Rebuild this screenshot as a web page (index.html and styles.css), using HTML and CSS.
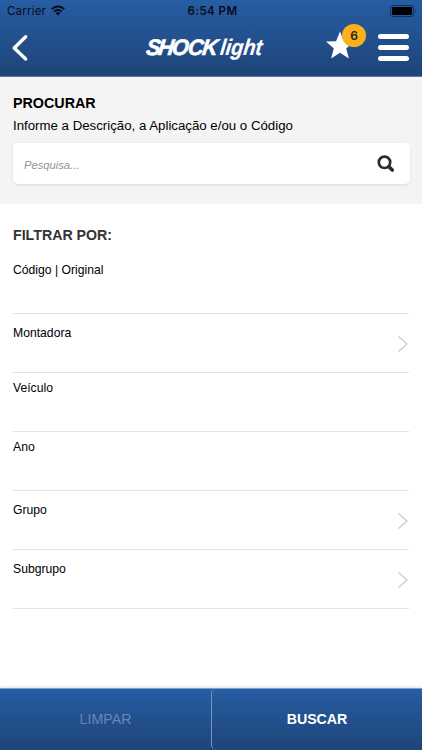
FILE: index.html
```html
<!DOCTYPE html>
<html lang="pt-BR">
<head>
<meta charset="utf-8">
<title>SHOCKlight</title>
<link rel="stylesheet" href="styles.css">
</head>
<body>
<div class="app">
  <header class="header">
    <div class="status">
      <div class="carrier"><span>Carrier</span>
        <svg class="wifi" width="14" height="11" viewBox="0 0 14 11" fill="none" stroke="#050c18" stroke-width="2"><path d="M.8 4.1a8.8 8.8 0 0 1 12.4 0M3.2 6.6a5.4 5.4 0 0 1 7.6 0"/><path d="M7 10.5 4.7 8.2a3.3 3.3 0 0 1 4.6 0z" fill="#050c18" stroke="none"/></svg>
      </div>
      <div class="clock">6:54 PM</div>
      <svg class="battery" width="27" height="12" viewBox="0 0 27 12"><rect x=".5" y=".5" width="23" height="11" rx="2.5" fill="none" stroke="#12305c"/><rect x="2" y="2" width="20" height="8" rx="1" fill="#000"/><path d="M25 4q2 2 0 4z" fill="#12305c"/></svg>
    </div>
    <nav class="nav">
      <svg class="back" width="18" height="28" viewBox="0 0 18 28"><path d="M14.7 2.7 3.2 14l11.5 11" fill="none" stroke="#fff" stroke-width="3.3" stroke-linecap="round" stroke-linejoin="round"/></svg>
      <svg class="logo" width="124" height="32" viewBox="0 0 124 32"><g transform="translate(0 23.5) skewX(-7)"><text class="shock" transform="scale(.96 1)"><tspan x="1.5">S</tspan><tspan x="14">H</tspan><tspan x="28.5">O</tspan><tspan x="45">C</tspan><tspan x="60">K</tspan></text><text class="light" x="75.5" y="0" textLength="42" lengthAdjust="spacingAndGlyphs">light</text></g></svg>
      <div class="favorite">
        <svg width="30" height="30" viewBox="0 0 30 30"><path d="m15 1.5 3.9 9.8 10 .3-7.7 6.8 2.7 10.1-8.9-5.7-8.9 5.7 2.7-10.1L1 11.6l10-.3z" fill="#fff"/></svg>
        <span class="badge">6</span>
      </div>
      <div class="menu"><i></i><i></i><i></i></div>
    </nav>
  </header>
  <section class="search">
    <h1>PROCURAR</h1>
    <p>Informe a Descrição, a Aplicação e/ou o Código</p>
    <div class="field"><span>Pesquisa...</span>
      <svg width="18" height="18" viewBox="0 0 18 18" fill="none" stroke="#2b2b2b"><circle cx="7.5" cy="7.3" r="5.7" stroke-width="2.7"/><path d="m11.9 11.7 3.4 3.4" stroke-width="3.6" stroke-linecap="round"/></svg>
    </div>
  </section>
  <main class="filters">
    <h2>FILTRAR POR:</h2>
    <div class="row first">Código | Original</div>
    <div class="row select">Montadora<svg class="chevron" width="12" height="18" viewBox="0 0 12 18"><path d="m1.5 1.5 8.5 7.5-8.5 7.5"/></svg></div>
    <div class="row">Veículo</div>
    <div class="row">Ano</div>
    <div class="row select">Grupo<svg class="chevron" width="12" height="18" viewBox="0 0 12 18"><path d="m1.5 1.5 8.5 7.5-8.5 7.5"/></svg></div>
    <div class="row select">Subgrupo<svg class="chevron" width="12" height="18" viewBox="0 0 12 18"><path d="m1.5 1.5 8.5 7.5-8.5 7.5"/></svg></div>
  </main>
  <footer class="actions">
    <div class="clear">LIMPAR</div>
    <div class="submit">BUSCAR</div>
  </footer>
</div>
</body>
</html>
```
FILE: styles.css
```css
* { box-sizing: border-box; }
body { margin: 0; font-family: "Liberation Sans", Arial, sans-serif; color: #000; background: #fff; }
svg { display: block; flex: none; }
.app { width: 422px; height: 750px; display: flex; flex-direction: column; overflow: hidden; }
.header { height: 77px; flex: none; background: linear-gradient(#275da3, #1e4478); border-bottom: 1px solid #61779f; }
.status { height: 22px; display: grid; grid-template-columns: 1fr auto 1fr; align-items: center; padding: 0 5px 0 7px; font-family: Inter, sans-serif; color: #050c18; }
.carrier { display: flex; align-items: center; gap: 5px; font-size: 11.5px; letter-spacing: .2px; }
.wifi { margin-top: -1px; }
.clock { font-size: 11.5px; font-weight: 600; letter-spacing: .45px; padding-left: 1px; }
.battery { justify-self: end; margin-top: -1px; }
.nav { height: 54px; display: flex; align-items: center; padding: 0 13px 0 11px; }
.back { margin-top: -3px; }
.logo { margin: -4px 0 0 115px; overflow: visible; }
.logo text { fill: #fff; font-family: "Liberation Sans", Arial, sans-serif; font-style: italic; font-weight: 700; stroke: #fff; }
.logo .shock { font-size: 22.5px; stroke-width: .6px; }
.logo .light { font-size: 22.5px; stroke-width: .2px; }
.favorite { position: relative; margin: -9px 0 0 57px; }
.badge { position: absolute; left: 17px; top: -6px; width: 24px; height: 23px; border-radius: 50%; background: #fbb01c; color: #222; font: 600 12px/23px Inter, sans-serif; text-align: center; }
.menu { width: 31px; margin: -4px 0 0 auto; display: grid; gap: 6px; }
.menu i { height: 5px; border-radius: 3px; background: #fff; }
.search { height: 127px; flex: none; padding: 16px 12px 0; background: #f4f4f4; }
.search h1 { margin: 0 0 0 1px; font-size: 14.3px; line-height: 20px; }
.search p { margin: 3px 0 0 1px; font-size: 13.26px; line-height: 20px; }
.field { height: 41px; margin: 7px 0 0 1px; padding: 0 15px 0 11px; display: flex; align-items: center; justify-content: space-between; background: #fff; border-radius: 5px; box-shadow: 0 1px 3px rgba(0,0,0,.1); }
.field span { font-size: 11.2px; font-style: italic; color: #929292; padding-top: 3px; }
.filters { flex: 1; padding: 21px 13px 0; }
.filters h2 { margin: 0; font-size: 14.2px; line-height: 20px; color: #333; }
.row { height: 59px; padding-top: 7px; border-bottom: 1px solid #e2e2e2; font-size: 12.2px; line-height: 16px; }
.row.first { height: 69px; padding-top: 17px; }
.row.select { display: flex; justify-content: space-between; padding-top: 11px; }
.chevron { margin-top: 10px; fill: none; stroke: #c9c9c9; stroke-width: 1.2; }
.actions { height: 62px; flex: none; display: grid; grid-template-columns: 211px 211px; background: linear-gradient(#275da3, #1e4478); border-top: 1px solid #7f9fca; box-shadow: 0 -1px 3px rgba(0,0,0,.12); font-size: 14.2px; line-height: 61px; text-align: center; }
.clear { color: #6488b8; }
.submit { color: #fff; font-weight: bold; border-left: 1px solid #7296c5; border-radius: 5px 0 0 5px; }
```
